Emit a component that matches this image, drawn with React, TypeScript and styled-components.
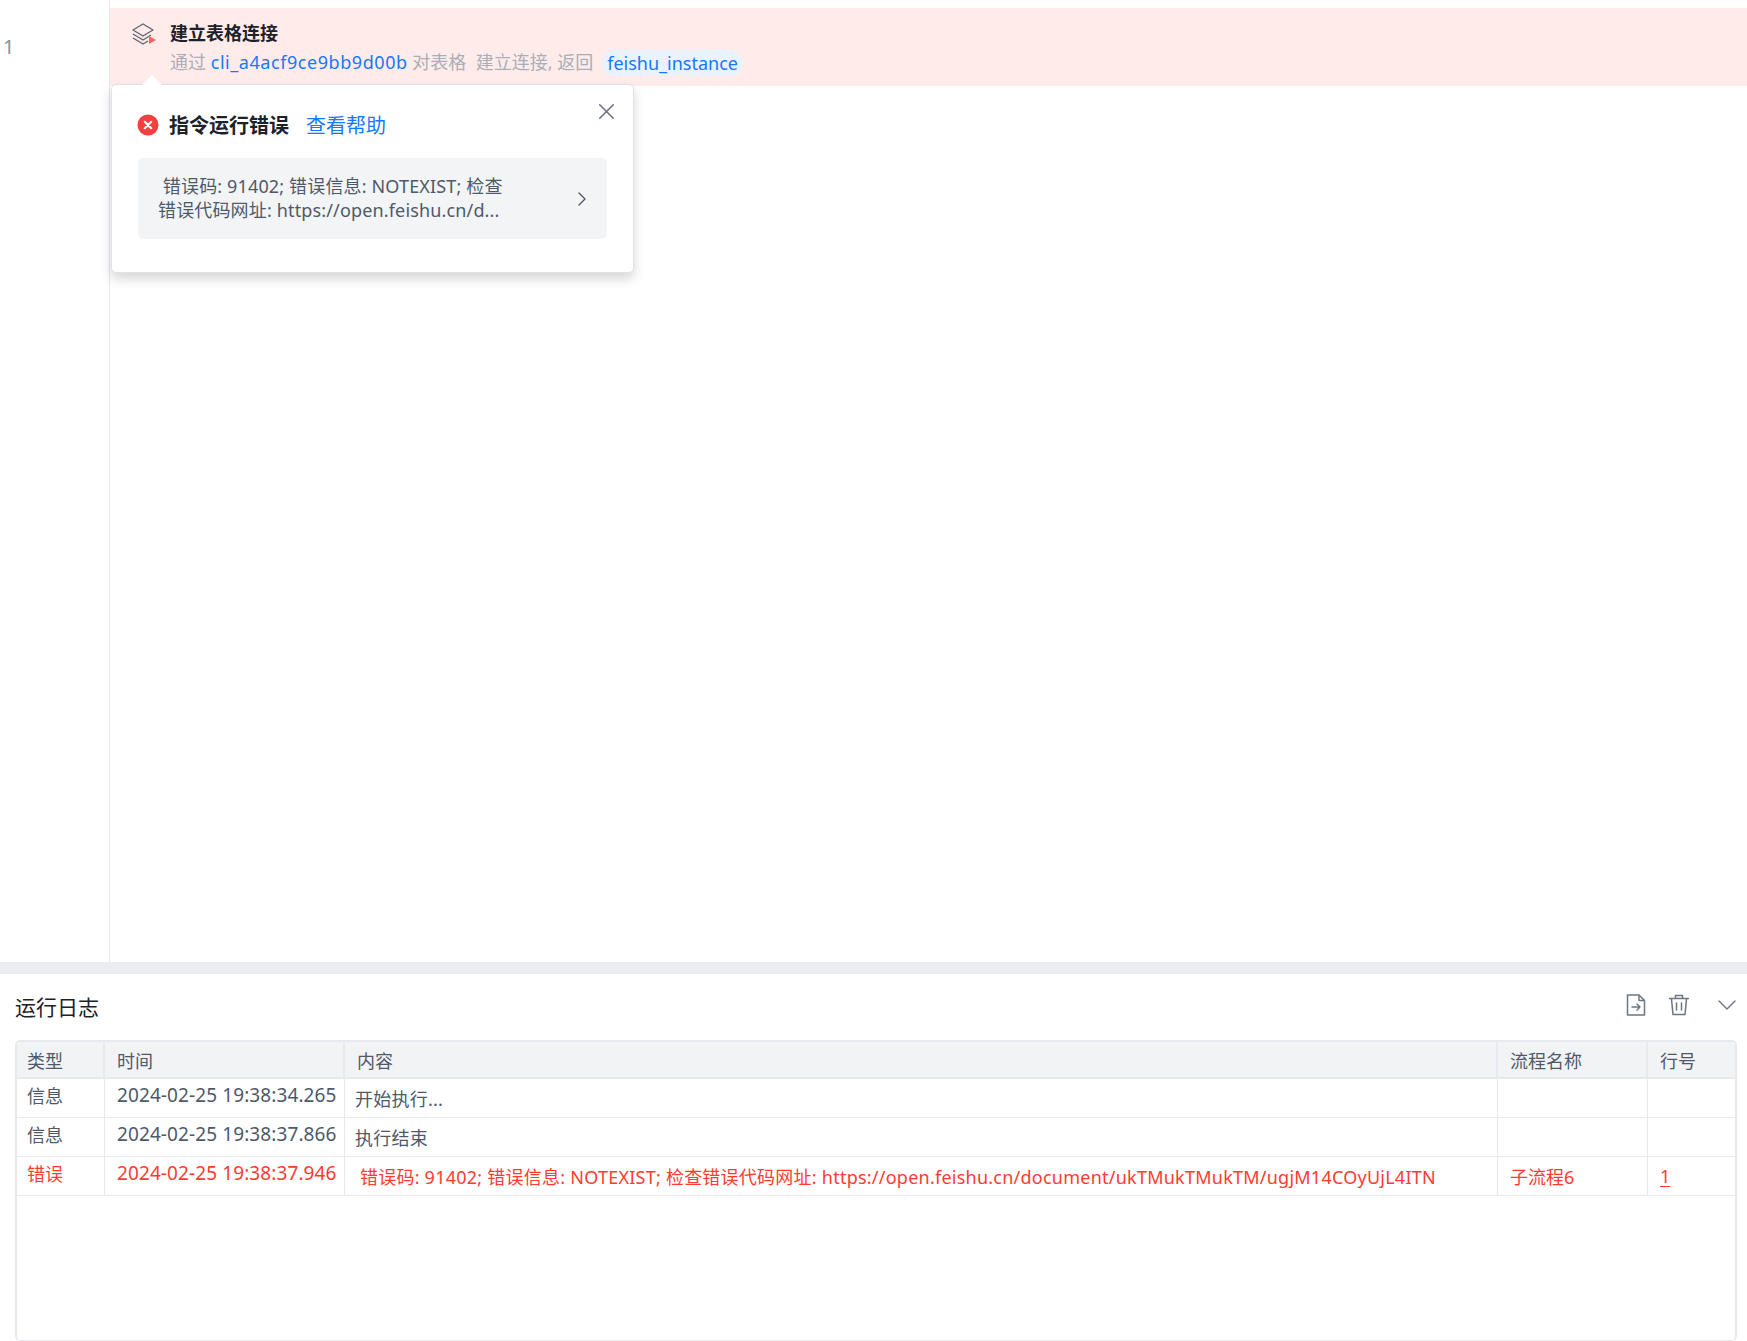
import React from 'react'
import styled, { createGlobalStyle } from 'styled-components'
import { ChevronDown, ChevronRight, X } from 'lucide-react'

const GlobalStyle = createGlobalStyle`
  html, body {
    margin: 0;
    padding: 0;
    background: #fff;
    font-family: "Noto Sans", "Noto Sans CJK SC", sans-serif;
  }
`

const Page = styled.div`
  width: 1747px;
  height: 1341px;
  display: flex;
  flex-direction: column;
  overflow: hidden;
`

const Editor = styled.div`
  height: 962px;
  display: flex;
  flex-shrink: 0;
  position: relative;
`

const Gutter = styled.div`
  width: 110px;
  flex-shrink: 0;
  box-sizing: border-box;
  border-right: 1px solid #e5e6eb;
  padding: 33px 0 0 3px;
  font-size: 20px;
  line-height: 28px;
  color: #86909c;
`

const Lines = styled.div`
  flex: 1;
  padding-top: 8px;
`

const CommandRow = styled.div`
  height: 78px;
  background: #ffecea;
  display: flex;
  box-sizing: border-box;
  padding: 13px 0 0 21px;
`

const LayerIcon = styled.svg`
  width: 26px;
  height: 24px;
  margin: 1px 13px 0 0;
  flex-shrink: 0;
`

const CommandBody = styled.div`
  display: flex;
  flex-direction: column;
`

const CommandTitle = styled.div`
  font-size: 18px;
  font-weight: 700;
  line-height: 24px;
  color: #1d2129;
`

const CommandLine = styled.div`
  display: flex;
  align-items: center;
  margin-top: 2px;
  font-size: 18px;
  line-height: 26px;
  color: #a9aeb8;
  white-space: pre;
`

const Accent = styled.span`
  color: #1677ff;
  letter-spacing: 0.56px;
`

const Token = styled.span`
  margin-left: 9px;
  padding: 0 5px;
  height: 26px;
  margin-top: 3px;
  line-height: 26px;
  border-radius: 13px;
  background: #e8f3ff;
  color: #1677ff;
`

const Popover = styled.div`
  position: absolute;
  left: 111px;
  top: 84px;
  width: 523px;
  height: 189px;
  box-sizing: border-box;
  padding: 0 26px 0 26px;
  background: #fff;
  border: 1px solid #e0e2e7;
  border-radius: 5px;
  box-shadow: 0 6px 12px rgba(0, 0, 0, 0.16);

  &::before {
    content: '';
    position: absolute;
    left: 30px;
    top: -10px;
    border-left: 10px solid transparent;
    border-right: 10px solid transparent;
    border-bottom: 10px solid #fff;
  }
`

const CloseButton = styled.span`
  position: absolute;
  right: 13px;
  top: 13px;
  display: flex;
  color: #6b7280;
`

const PopoverHead = styled.div`
  height: 73px;
  display: flex;
  align-items: center;
  padding-top: 6px;
  box-sizing: border-box;
`

const ErrorIcon = styled.svg`
  width: 22px;
  height: 22px;
  margin-left: -1px;
  margin-right: 10px;
`

const PopoverTitle = styled.span`
  font-size: 20px;
  font-weight: 700;
  color: #1d2129;
`

const HelpLink = styled.a`
  margin-left: 17px;
  font-size: 20px;
  color: #1677ff;
`

const MessageBox = styled.div`
  height: 81px;
  border-radius: 5px;
  background: #f3f4f6;
  display: flex;
  align-items: center;
  justify-content: space-between;
  padding: 0 13px 0 20px;
  color: #4e5969;
`

const MessageText = styled.div`
  font-size: 18px;
  line-height: 24px;
  letter-spacing: 0.15px;
  white-space: pre;
  margin-top: -2px;
`

const Splitter = styled.div`
  height: 12px;
  flex-shrink: 0;
  background: #ebecf0;
`

const LogPanel = styled.div`
  flex: 1;
  display: flex;
  flex-direction: column;
  padding: 0 10px 0 15px;
  min-height: 0;
`

const LogHead = styled.div`
  height: 66px;
  flex-shrink: 0;
  display: flex;
  align-items: center;
  justify-content: space-between;
  padding-bottom: 2px;
  box-sizing: border-box;
`

const LogTitle = styled.div`
  font-size: 21px;
  color: #1d2129;
`

const LogTools = styled.div`
  display: flex;
  align-items: center;
  color: #6b7686;
  gap: 21px;
  margin: 0 -6px 2px 0;
`

const ToolIcon = styled.svg`
  width: 22px;
  height: 22px;
`

const TableWrap = styled.div`
  flex: 1;
  border: 2px solid #e8e9ee;
  border-bottom-width: 1px;
  border-radius: 5px;
  overflow: hidden;
`

const LogTable = styled.table`
  width: 100%;
  table-layout: fixed;
  border-collapse: separate;
  border-spacing: 0;
  font-size: 18px;
`

const HeadCell = styled.th<{ $inset?: number }>`
  height: 37px;
  padding: 0 0 0 ${({ $inset }) => $inset ?? 12}px;
  box-sizing: border-box;
  background: #f2f3f5;
  border-right: 2px solid #e8e9ee;
  border-bottom: 2px solid #e8e9ee;
  font-weight: 400;
  text-align: left;
  color: #4e5969;

  &:last-child {
    border-right: 0;
  }
`

const Cell = styled.td<{ $error?: boolean; $raised?: boolean; $inset?: number }>`
  height: 39px;
  box-sizing: border-box;
  padding: 0 0 ${({ $raised }) => ($raised ? 6 : 0)}px ${({ $inset }) => $inset ?? 12}px;
  border-right: 1px solid #e8e9ee;
  border-bottom: 1px solid #e8e9ee;
  color: ${({ $error }) => ($error ? '#ff3b30' : '#4e5969')};
  white-space: pre;

  &:last-child {
    border-right: 0;
  }
`

const TimeCell = styled(Cell)`
  font-size: 19px;
  letter-spacing: 0.1px;
`

const ContentCell = styled(Cell)`
  letter-spacing: 0.24px;
`

const LineLink = styled.span`
  text-decoration: underline;
  text-underline-offset: 3px;
`

type LogRow = {
  type: string
  time: string
  content: string
  flow?: string
  line?: string
  error?: boolean
}

const rows: LogRow[] = [
  { type: '信息', time: '2024-02-25 19:38:34.265', content: '开始执行...' },
  { type: '信息', time: '2024-02-25 19:38:37.866', content: '执行结束' },
  {
    type: '错误',
    time: '2024-02-25 19:38:37.946',
    content: ' 错误码: 91402; 错误信息: NOTEXIST; 检查错误代码网址: https://open.feishu.cn/document/ukTMukTMukTM/ugjM14COyUjL4ITN',
    flow: '子流程6',
    line: '1',
    error: true,
  },
]

export default function App() {
  return (
    <Page>
      <GlobalStyle />
      <Editor>
        <Gutter>1</Gutter>
        <Lines>
          <CommandRow>
            <LayerIcon viewBox="0 0 26 24" fill="none" stroke="#5f6673" strokeWidth="1.4" strokeLinejoin="round">
              <path d="M12 2 L22 8 L12 14 L2 8 Z" />
              <path d="M2 12 L12 18 L20 13" />
              <path d="M2 16 L12 22 L17 19" />
              <path d="M18 14 L25 18 L18 22 Z" fill="#f76560" stroke="none" />
            </LayerIcon>
            <CommandBody>
              <CommandTitle>建立表格连接</CommandTitle>
              <CommandLine>
                通过 <Accent>cli_a4acf9ce9bb9d00b</Accent> 对表格  建立连接, 返回
                <Token>feishu_instance</Token>
              </CommandLine>
            </CommandBody>
          </CommandRow>
        </Lines>
        <Popover>
          <CloseButton>
            <X size={27} strokeWidth={1.4} />
          </CloseButton>
          <PopoverHead>
            <ErrorIcon viewBox="0 0 22 22">
              <circle cx="11" cy="11" r="10.5" fill="#f53f3f" />
              <path d="M7.8 7.8 L14.2 14.2 M14.2 7.8 L7.8 14.2" stroke="#fff" strokeWidth="2.2" strokeLinecap="round" />
            </ErrorIcon>
            <PopoverTitle>指令运行错误</PopoverTitle>
            <HelpLink>查看帮助</HelpLink>
          </PopoverHead>
          <MessageBox>
            <MessageText>
              {' 错误码: 91402; 错误信息: NOTEXIST; 检查'}
              <br />
              {'错误代码网址: https://open.feishu.cn/d...'}
            </MessageText>
            <ChevronRight size={24} strokeWidth={1.4} />
          </MessageBox>
        </Popover>
      </Editor>
      <Splitter />
      <LogPanel>
        <LogHead>
          <LogTitle>运行日志</LogTitle>
          <LogTools>
            <ToolIcon viewBox="0 0 22 22" fill="none" stroke="currentColor" strokeWidth="1.5" strokeLinejoin="round">
              <path d="M2.5 1 H14 L19.5 6.5 V21 H2.5 Z" />
              <path d="M14 1 V6.5 H19.5" />
              <path d="M7 13 H15 M12 10 L15 13 L12 16" strokeLinecap="round" />
            </ToolIcon>
            <ToolIcon viewBox="0 0 22 22" fill="none" stroke="currentColor" strokeWidth="1.5" strokeLinecap="round">
              <path d="M1.5 4.5 H20.5" />
              <path d="M7.5 4 V1.5 H14.5 V4" />
              <path d="M3.5 5 L5 20.5 H17 L18.5 5" />
              <path d="M8.5 9 V16 M13.5 9 V16" />
            </ToolIcon>
            <ChevronDown size={32} strokeWidth={1} />
          </LogTools>
        </LogHead>
        <TableWrap>
          <LogTable>
            <colgroup>
              <col style={{ width: 88 }} />
              <col style={{ width: 240 }} />
              <col style={{ width: 1153 }} />
              <col style={{ width: 150 }} />
              <col />
            </colgroup>
            <thead>
              <tr>
                <HeadCell $inset={10}>类型</HeadCell>
                <HeadCell>时间</HeadCell>
                <HeadCell>内容</HeadCell>
                <HeadCell>流程名称</HeadCell>
                <HeadCell>行号</HeadCell>
              </tr>
            </thead>
            <tbody>
              {rows.map((row) => (
                <tr key={row.time}>
                  <Cell $error={row.error} $raised $inset={10}>{row.type}</Cell>
                  <TimeCell $error={row.error} $raised>{row.time}</TimeCell>
                  <ContentCell $error={row.error} $inset={10}>{row.content}</ContentCell>
                  <Cell $error={row.error}>{row.flow}</Cell>
                  <Cell $error={row.error}>{row.line && <LineLink>{row.line}</LineLink>}</Cell>
                </tr>
              ))}
            </tbody>
          </LogTable>
        </TableWrap>
      </LogPanel>
    </Page>
  )
}
